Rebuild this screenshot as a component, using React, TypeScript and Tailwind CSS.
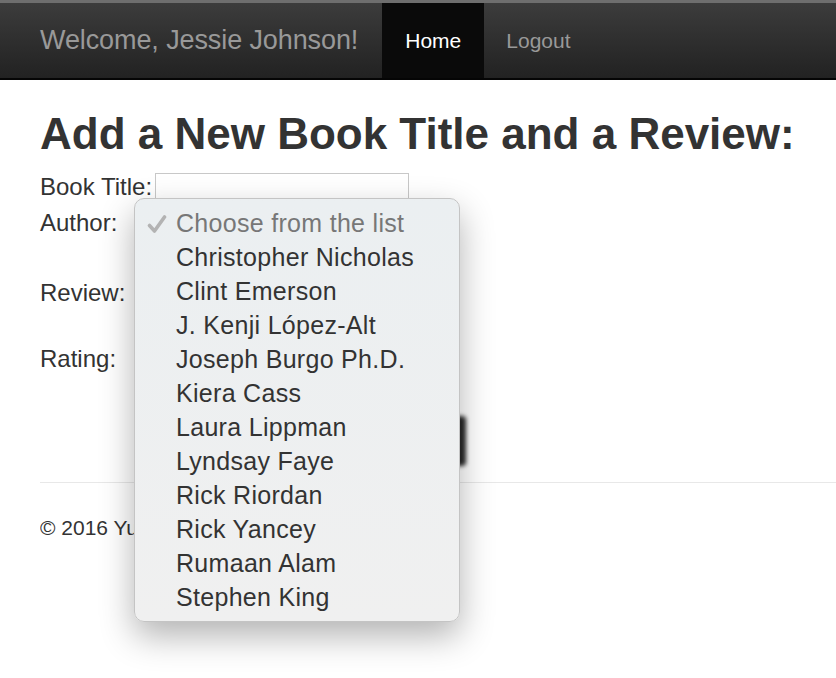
import React from 'react';

const AUTHORS = [
    'Christopher Nicholas',
    'Clint Emerson',
    'J. Kenji López-Alt',
    'Joseph Burgo Ph.D.',
    'Kiera Cass',
    'Laura Lippman',
    'Lyndsay Faye',
    'Rick Riordan',
    'Rick Yancey',
    'Rumaan Alam',
    'Stephen King',
];

const Check = () => (
    <svg width="20" height="20" viewBox="0 0 20 20" className="block">
        <path d="M2.5 11.5 L7.5 17 L17.5 3" fill="none" stroke="#b3b3b3" strokeWidth="3.6" strokeLinecap="round" strokeLinejoin="round" />
    </svg>
);

const App: React.FC = () => {
    return (
        <div className="relative w-[836px] h-[678px] overflow-hidden bg-white text-[#333] font-['Liberation_Sans',Arial,sans-serif]">
            {/* navbar */}
            <div className="h-[3px] bg-[#6e6e6e]" />
            <div className="h-[77px] flex items-stretch px-[40px] bg-gradient-to-b from-[#3c3c3c] to-[#222] border-b-2 border-[#050505]">
                <div className="flex items-center text-[27px] tracking-[-0.1px] text-[#999] pr-[24px]">Welcome, Jessie Johnson!</div>
                <div className="flex items-center px-[23px] bg-[#0a0a0a] text-white text-[21px] tracking-[0px]">Home</div>
                <div className="flex items-center px-[22px] text-[#999] text-[21px] tracking-[0px]">Logout</div>
            </div>

            {/* content */}
            <div className="px-[40px]">
                <h1 className="mt-[30px] text-[44px] leading-[48px] font-bold whitespace-nowrap">Add a New Book Title and a Review:</h1>
                <form className="mt-[15px] text-[24px] leading-[27px]">
                    <div className="flex items-center h-[27px]">
                        <span>Book Title:</span>
                        <input className="ml-[3px] w-[254px] h-[27px] border border-[#c8c8c8] bg-white outline-none" />
                    </div>
                    <div className="flex items-center h-[44px]">
                        <span>Author:</span>
                        <div className="ml-[20px] w-[200px] h-[26px] border border-[#ccc] rounded bg-[#f5f5f5]" />
                    </div>
                    <div className="flex items-start h-[81px] pt-[35px]">
                        <span>Review:</span>
                        <div className="ml-[14px] w-[250px] h-[40px] border border-[#ccc] bg-white" />
                    </div>
                    <div className="flex items-center h-[66px]">
                        <span>Rating:</span>
                        <div className="ml-[25px] w-[80px] h-[26px] border border-[#ccc] rounded bg-[#f5f5f5]" />
                    </div>
                    <div className="flex justify-end w-[426px] mt-[25px]">
                        <div className="w-[90px] h-[50px] rounded-[4px] bg-[#2a2a2a] blur-[2px]" />
                    </div>
                </form>
                <hr className="mt-[16px] border-0 border-t border-[#e8e8e8] -mr-[40px]" />
                <div className="mt-[33px] w-[94px] overflow-hidden whitespace-nowrap text-[21px] leading-[24px]">© 2016 Yuliya Smirnova</div>
            </div>

            {/* native select popup */}
            <div className="absolute left-[134px] top-[198px] w-[326px] h-[424px] rounded-[10px] border border-[#c4c4c4] bg-gradient-to-b from-[#ebeff1] to-[#f0f0f0] shadow-[0_14px_34px_rgba(0,0,0,0.3)] py-[8px] text-[25px] tracking-[0.3px]">
                <div className="flex items-center h-[34px] text-[#777]">
                    <div className="w-[41px] flex justify-center pl-[2px]"><Check /></div>
                    <span>Choose from the list</span>
                </div>
                {AUTHORS.map(a => (
                    <div key={a} className="flex items-center h-[34px] pl-[41px] text-[#333]">{a}</div>
                ))}
            </div>
        </div>
    );
};

export default App;
